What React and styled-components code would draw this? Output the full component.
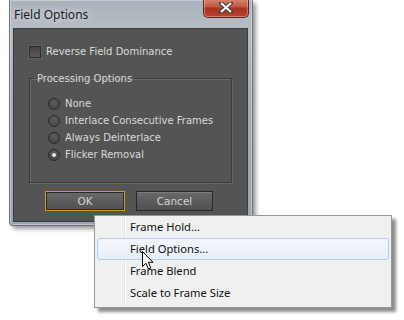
import React from "react";
import styled, { createGlobalStyle, css } from "styled-components";

const Global = createGlobalStyle`
  body {
    margin: 0;
    background: #ffffff;
  }
`;

const Stage = styled.div`
  position: relative;
  width: 404px;
  height: 320px;
  overflow: hidden;
  background: #ffffff;
`;

// dialog window
const Window = styled.div`
  margin-left: 9px;
  width: 244px;
  height: 226px;
  box-sizing: border-box;
  display: flex;
  flex-direction: column;
  padding: 0 4px 3px 3px;
  border: 1px solid #6c737c;
  border-top: none;
  border-radius: 0 0 4px 4px;
  background: linear-gradient(180deg, #aab1ba 0%, #b6bcc4 12%, #a5acb6 40%, #9ca4ae 100%);
  box-shadow: 3px 3px 4px rgba(0, 0, 0, 0.4), inset 0 0 0 1px rgba(255, 255, 255, 0.35);
`;

const TitleBar = styled.div`
  height: 28px;
  display: flex;
  align-items: flex-start;
  justify-content: space-between;
  flex-shrink: 0;
`;

const Title = styled.span`
  margin: 6px 0 0 1px;
  font-family: "Noto Sans", "Liberation Sans", sans-serif;
  font-size: 12px;
  color: #1b1b1b;
  text-shadow: 0 0 6px rgba(255, 255, 255, 0.8);
`;

const CloseButton = styled.div`
  width: 46px;
  height: 20px;
  margin-top: -2px;
  margin-right: -1px;
  box-sizing: border-box;
  display: flex;
  align-items: center;
  justify-content: center;
  border: 1px solid #5b2a24;
  border-top: none;
  border-radius: 0 0 5px 5px;
  background: linear-gradient(180deg, #d98d7e 0%, #c4573f 45%, #a8331e 55%, #b8442c 100%);
  box-shadow: inset 0 0 0 1px rgba(255, 210, 200, 0.4);
`;

const Client = styled.div`
  flex: 1;
  box-sizing: border-box;
  background: #545454;
  border: 1px solid #3c3e42;
  padding: 16px 0 0 15px;
  display: flex;
  flex-direction: column;
`;

const Label = styled.label`
  display: flex;
  align-items: center;
  gap: 5px;
  font-family: "DejaVu Sans", "Liberation Sans", sans-serif;
  font-size: 10px;
  color: #dadada;
  height: 13px;
`;

const CheckBox = styled.span`
  width: 12px;
  height: 12px;
  box-sizing: border-box;
  border: 1px solid #2b2b2b;
  background: linear-gradient(180deg, #444 0%, #5a5a5a 100%);
  box-shadow: 0 0 0 1px rgba(255, 255, 255, 0.08);
`;

const Group = styled.fieldset`
  margin: 15px 0 0 0;
  width: 203px;
  height: 110px;
  box-sizing: border-box;
  border: 1px solid #3b3b3b;
  box-shadow: 1px 1px 0 #686868, inset 1px 1px 0 #686868;
  padding: 13px 0 0 18px;
  display: flex;
  flex-direction: column;
  gap: 4px;
`;

const Legend = styled.legend`
  margin-left: -14px;
  padding: 0 3px;
  font-family: "DejaVu Sans", "Liberation Sans", sans-serif;
  font-size: 10px;
  color: #dadada;
`;

const Radio = styled.span`
  width: 12px;
  height: 12px;
  box-sizing: border-box;
  border-radius: 50%;
  border: 1px solid #2a2a2a;
  background: radial-gradient(circle at 50% 35%, #5c5c5c 0%, #474747 80%);
  display: flex;
  align-items: center;
  justify-content: center;
  ${(p) =>
    p.checked &&
    css`
      &::after {
        content: "";
        width: 4px;
        height: 4px;
        border-radius: 50%;
        background: #e8e8e8;
      }
    `}
`;

const ButtonRow = styled.div`
  display: flex;
  gap: 11px;
  margin: 8px 0 0 16px;
`;

const Button = styled.div`
  width: ${(p) => p.w}px;
  height: 20px;
  box-sizing: border-box;
  display: flex;
  align-items: center;
  justify-content: center;
  font-family: "DejaVu Sans", "Liberation Sans", sans-serif;
  font-size: 10.5px;
  color: #d4d4d4;
  border: 1px solid #262626;
  background: linear-gradient(180deg, #6a6a6a 0%, #5c5c5c 50%, #515151 100%);
  box-shadow: inset 0 1px 0 rgba(255, 255, 255, 0.12);
  ${(p) =>
    p.primary &&
    css`
      border-color: #d99a1c;
      box-shadow: inset 0 0 0 1px #2a2a2a;
    `}
`;

// context menu that lies over the dialog
const Menu = styled.div`
  position: absolute;
  left: 94px;
  top: 215px;
  width: 298px;
  box-sizing: border-box;
  padding: 0 0 3px 0;
  background: linear-gradient(90deg, #f1f1f1 0, #f1f1f1 29px, #e2e3e3 29px, #e2e3e3 30px, #ffffff 30px, #ffffff 31px, #f0f0f0 31px);
  border: 1px solid #979797;
  box-shadow: 4px 4px 3px rgba(0, 0, 0, 0.45);
`;

const Item = styled.div`
  height: 22px;
  margin: 0 2px;
  box-sizing: border-box;
  display: flex;
  align-items: center;
  padding: 0 0 2px 32px;
  font-family: "Noto Sans", "Liberation Sans", sans-serif;
  font-size: 11.2px;
  color: #111;
  border: 1px solid transparent;
  border-radius: 3px;
  ${(p) =>
    p.active &&
    css`
      border-color: #aecff5;
      background: linear-gradient(180deg, #f4f7fc 0%, #e8eef8 100%);
    `}
`;

const Cursor = styled.svg`
  position: absolute;
  left: 142px;
  top: 251px;
`;

export default function App() {
  const options = ["None", "Interlace Consecutive Frames", "Always Deinterlace", "Flicker Removal"];
  const items = ["Frame Hold...", "Field Options...", "Frame Blend", "Scale to Frame Size"];
  return (
    <Stage>
      <Global />
      <Window>
        <TitleBar>
          <Title>Field Options</Title>
          <CloseButton>
            <svg width="14" height="11" viewBox="0 0 14 11">
              <path
                d="M2 1 L12 10 M12 1 L2 10"
                stroke="#3a3a3a"
                strokeWidth="4"
                strokeLinecap="round"
              />
              <path d="M2 1 L12 10 M12 1 L2 10" stroke="#ffffff" strokeWidth="2.2" />
            </svg>
          </CloseButton>
        </TitleBar>
        <Client>
          <Label>
            <CheckBox />
            Reverse Field Dominance
          </Label>
          <Group>
            <Legend>Processing Options</Legend>
            {options.map((o, i) => (
              <Label key={o}>
                <Radio checked={i === 3} />
                {o}
              </Label>
            ))}
          </Group>
          <ButtonRow>
            <Button primary w={80}>OK</Button>
            <Button w={77}>Cancel</Button>
          </ButtonRow>
        </Client>
      </Window>
      <Menu>
        {items.map((t, i) => (
          <Item key={t} active={i === 1}>
            {t}
          </Item>
        ))}
      </Menu>
      <Cursor width="13" height="20" viewBox="0 0 13 20">
        <path
          d="M0.5 0.5 L0.5 15.5 L4 12.2 L6.5 18 L8.8 17 L6.4 11.3 L11 11.3 Z"
          fill="#ffffff"
          stroke="#000000"
          strokeWidth="1"
          strokeLinejoin="round"
        />
      </Cursor>
    </Stage>
  );
}
